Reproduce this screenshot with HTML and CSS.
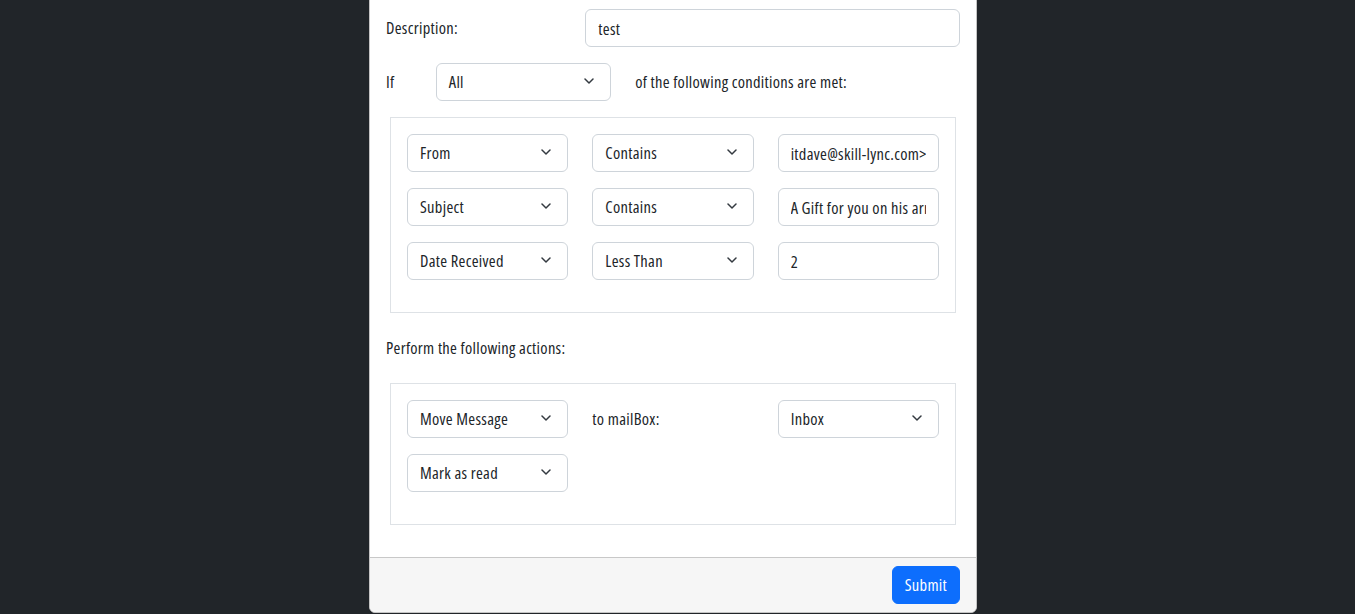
FILE: index.html
```html
<!DOCTYPE html>
<html lang="en">
<head>
<meta charset="utf-8">
<title>Rule</title>
<link rel="stylesheet" href="styles.css">
</head>
<body>
<div class="page">
  <div class="modal">
    <div class="modal-body">
      <div class="grid12 mb">
        <label class="col-4 col-label">Description:</label>
        <div class="col-8"><input class="control" type="text" value="test"></div>
      </div>
      <div class="grid12">
        <label class="col-1 col-label">If</label>
        <div class="col-4">
          <div class="select"><span>All</span><svg class="chev" viewBox="0 0 10 6"><path d="M1 1l4 4 4-4"/></svg></div>
        </div>
        <div class="col-7 col-label">of the following conditions are met:</div>
      </div>

      <div class="box">
        <div class="select"><span>From</span><svg class="chev" viewBox="0 0 10 6"><path d="M1 1l4 4 4-4"/></svg></div>
        <div class="select"><span>Contains</span><svg class="chev" viewBox="0 0 10 6"><path d="M1 1l4 4 4-4"/></svg></div>
        <input class="control" type="text" value="itdave@skill-lync.com&gt;">
        <div class="select"><span>Subject</span><svg class="chev" viewBox="0 0 10 6"><path d="M1 1l4 4 4-4"/></svg></div>
        <div class="select"><span>Contains</span><svg class="chev" viewBox="0 0 10 6"><path d="M1 1l4 4 4-4"/></svg></div>
        <input class="control" type="text" value="A Gift for you on his arrival">
        <div class="select"><span>Date Received</span><svg class="chev" viewBox="0 0 10 6"><path d="M1 1l4 4 4-4"/></svg></div>
        <div class="select"><span>Less Than</span><svg class="chev" viewBox="0 0 10 6"><path d="M1 1l4 4 4-4"/></svg></div>
        <input class="control" type="text" value="2">
      </div>

      <div class="grid12 mt">
        <div class="col-12 col-label">Perform the following actions:</div>
      </div>

      <div class="box">
        <div class="select"><span>Move Message</span><svg class="chev" viewBox="0 0 10 6"><path d="M1 1l4 4 4-4"/></svg></div>
        <div class="col-label">to mailBox:</div>
        <div class="select"><span>Inbox</span><svg class="chev" viewBox="0 0 10 6"><path d="M1 1l4 4 4-4"/></svg></div>
        <div class="select"><span>Mark as read</span><svg class="chev" viewBox="0 0 10 6"><path d="M1 1l4 4 4-4"/></svg></div>
      </div>
    </div>
    <div class="modal-footer">
      <button class="btn-primary" type="button">Submit</button>
    </div>
  </div>
</div>
</body>
</html>
```

FILE: styles.css
```css
* { box-sizing: border-box; }
html, body { margin: 0; padding: 0; }
body {
  background: #212529;
  font-family: "Open Sans", "DejaVu Sans Condensed", sans-serif;
  font-stretch: 75%;
  font-size: 16.5px;
  letter-spacing: 0.3px;
  line-height: 1.5;
  color: #212529;
  height: 614px;
  overflow: hidden;
}
.page {
  padding-right: 9px;
}
.modal {
  width: 608px;
  margin: -8px auto 0;
  background: #fff;
  border: 1px solid #c4c4c4;
  border-radius: 6px;
  overflow: hidden;
}
.modal-body {
  padding: 16px;
}
.grid12 {
  display: grid;
  grid-template-columns: repeat(12, 1fr);
  column-gap: 24px;
}
.mb { margin-bottom: 16px; }
.mt { margin-top: 16px; margin-bottom: 16px; }
.col-1 { grid-column: span 1; }
.col-4 { grid-column: span 4; }
.col-7 { grid-column: span 7; }
.col-8 { grid-column: span 8; }
.col-12 { grid-column: span 12; }
.col-label {
  padding: 7px 0;
  line-height: 24px;
}
.control, .select {
  display: block;
  width: 100%;
  height: 38px;
  padding: 6px 12px;
  font: inherit;
  letter-spacing: inherit;
  line-height: 24px;
  color: #212529;
  background: #fff;
  border: 1px solid #ced4da;
  border-radius: 6px;
  outline: none;
}
.select {
  display: flex;
  align-items: center;
  justify-content: space-between;
}
.chev {
  width: 10px;
  height: 6px;
  flex: none;
  margin-right: 4px;
  margin-top: -3px;
}
.chev path {
  fill: none;
  stroke: #343a40;
  stroke-width: 1.5;
  stroke-linecap: round;
  stroke-linejoin: round;
}
.box {
  margin: 16px 4px;
  border: 1px solid #dee2e6;
  padding: 16px 16px 32px;
  display: grid;
  grid-template-columns: repeat(3, 1fr);
  column-gap: 24px;
  row-gap: 16px;
}
.modal-footer {
  border-top: 1px solid #c8c8c8;
  background: #f6f6f6;
  padding: 8px 16px;
  display: flex;
  justify-content: flex-end;
}
.btn-primary {
  font: inherit;
  letter-spacing: inherit;
  line-height: 24px;
  height: 38px;
  padding: 6px 12px;
  color: #fff;
  background: #0d6efd;
  border: 1px solid #0d6efd;
  border-radius: 6px;
}
```
